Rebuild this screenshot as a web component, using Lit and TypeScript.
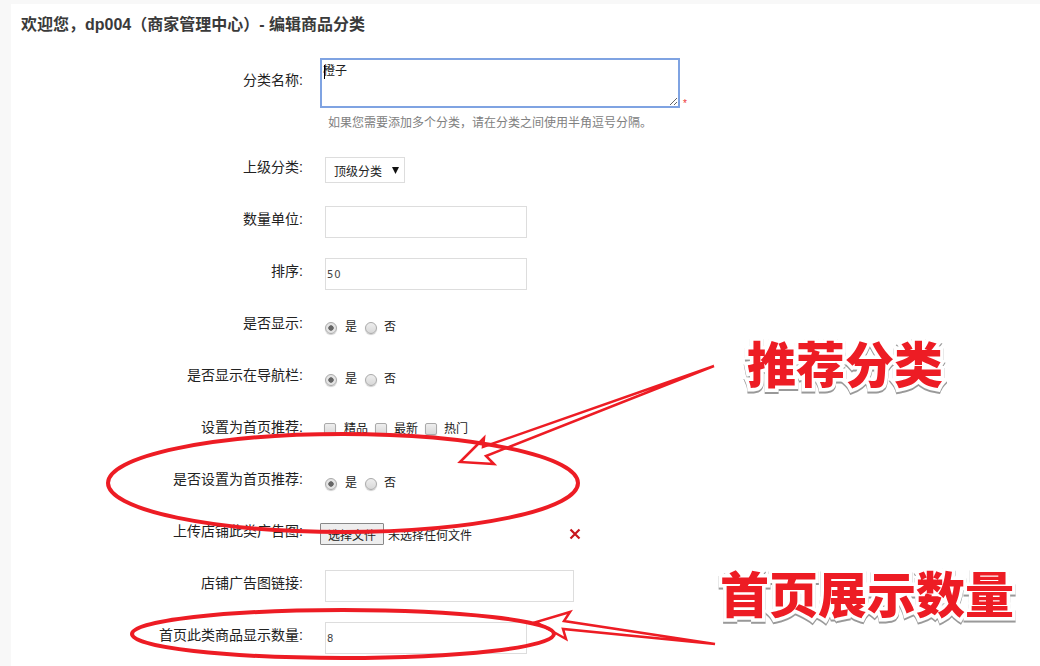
import { LitElement, html, css } from "lit";
import { customElement } from "lit/decorators.js";

@customElement("app-root")
export class AppRoot extends LitElement {
  static styles = css`
    :host { display: block; width: 1040px; height: 666px; overflow: hidden; position: relative; background: #f8f8f8; font-family: "Liberation Sans", "Noto Sans CJK SC", sans-serif; color: #222; }
    .panel { margin: 4px 0 0 11px; height: 662px; background: #fff; padding: 0 0 0 10px; box-sizing: border-box; }
    h1 { margin: 0; height: 54px; font-size: 16px; line-height: 42px; font-weight: bold; color: #3a3a3a; }
    .row { display: flex; height: 52px; margin-left: -21px; }
    .row.first { height: 96px; }
    .label { width: 282px; padding-left: 21px; box-sizing: content-box; flex: none; text-align: right; font-size: 14px; line-height: 26px; white-space: nowrap; }
    .first .label { padding-top: 9px; }
    .ctl { margin-left: 22px; font-size: 12px; position: relative; }
    .ta-wrap { position: relative; margin-left: -5px; display: flex; align-items: flex-end; }
    textarea { width: 360px; height: 50px; box-sizing: border-box; border: 2px solid #7fa3e2; outline: none; padding: 1px 1px; font: 12px "Noto Sans CJK SC", sans-serif; color: #222; margin: 0; display: block; }
    .caret { position: absolute; left: 4px; top: 7px; width: 1px; height: 14px; background: #000; }
    .star { color: #e33; font-size: 10px; margin: 0 0 -3px 3px; line-height: 14px; }
    .hint { margin: 7px 0 0 3px; color: #808080; font-size: 12px; line-height: 16px; white-space: nowrap; }
    .select { margin-top: 3px; width: 80px; height: 26px; box-sizing: border-box; border: 1px solid #ddd; display: flex; align-items: center; justify-content: space-between; padding: 0 5px 0 8px; font-size: 12px; }
    .select svg { width: 7px; height: 7px; }
    input.text { display: block; width: 202px; height: 32px; box-sizing: border-box; border: 1px solid #ddd; padding: 0 1px; font: 10px "DejaVu Sans", sans-serif; letter-spacing: 1px; color: #444; margin: 0; outline: none; }
    input.wide { width: 249px; }
    .opts { display: flex; align-items: center; height: 20px; margin-top: 8px; line-height: 20px; font-size: 12px; }
    .opts input { appearance: none; -webkit-appearance: none; margin: 0 8px 0 0; flex: none; width: 12px; height: 12px; box-sizing: border-box; border: 1px solid #aaa; background: linear-gradient(#eee, #d8d8d8); box-shadow: 0 1px 1px #ccc; }
    .opts input[type="radio"] { border-radius: 50%; }
    .opts input[type="radio"]:checked { background: radial-gradient(circle, #666 0 2.4px, #e4e4e4 3px); }
    .opts input[type="checkbox"] { border-radius: 2px; }
    .opts span { margin: -3px 8px 0 0; }
    .opts input + span + input { margin-right: 7px; }
    .opts.cb { margin-top: 5px; margin-left: -1px; }
    .opts.cb span { margin: 0 7px 0 0; }
    .file { display: flex; align-items: center; margin: 5px 0 0 -5px; font-size: 12px; }
    .file button { width: 64px; height: 22px; padding: 0; border: 1px solid #888; border-radius: 1px; background: #eee; font: 12px "Noto Sans CJK SC", sans-serif; color: #222; margin-right: 4px; }
    .remove { position: absolute; left: 244px; top: 10px; width: 12px; height: 12px; }
    .anno { position: absolute; left: 0; top: 0; width: 1040px; height: 666px; pointer-events: none; }
    .big { position: absolute; white-space: nowrap; font-family: "Noto Sans CJK SC", sans-serif; font-weight: 900; color: #ed1c24; -webkit-text-stroke: 7px #fff; paint-order: stroke fill; filter: drop-shadow(0 2px 0 #999); line-height: 1; }
    .b1 { left: 747px; top: 337px; font-size: 49px; }
    .b2 { left: 720px; top: 567px; font-size: 49px; }
  `;

  private yn() {
    return html`<div class="opts"><input type="radio" checked /><span>是</span><input type="radio" /><span>否</span></div>`;
  }

  render() {
    return html`
      <div class="panel">
        <h1>欢迎您，dp004（商家管理中心）- 编辑商品分类</h1>
        <div class="row first">
          <div class="label">分类名称:</div>
          <div class="ctl">
            <div class="ta-wrap"><textarea .value=${"橙子"}></textarea><i class="caret"></i><span class="star">*</span></div>
            <div class="hint">如果您需要添加多个分类，请在分类之间使用半角逗号分隔。</div>
          </div>
        </div>
        <div class="row">
          <div class="label">上级分类:</div>
          <div class="ctl"><div class="select">顶级分类<svg viewBox="0 0 7 7"><path d="M0 0h7L3.5 7z" fill="#111"/></svg></div></div>
        </div>
        <div class="row"><div class="label">数量单位:</div><div class="ctl"><input class="text" /></div></div>
        <div class="row"><div class="label">排序:</div><div class="ctl"><input class="text" value="50" /></div></div>
        <div class="row"><div class="label">是否显示:</div><div class="ctl">${this.yn()}</div></div>
        <div class="row"><div class="label">是否显示在导航栏:</div><div class="ctl">${this.yn()}</div></div>
        <div class="row">
          <div class="label">设置为首页推荐:</div>
          <div class="ctl"><div class="opts cb"><input type="checkbox" /><span>精品</span><input type="checkbox" /><span>最新</span><input type="checkbox" /><span>热门</span></div></div>
        </div>
        <div class="row"><div class="label">是否设置为首页推荐:</div><div class="ctl">${this.yn()}</div></div>
        <div class="row">
          <div class="label">上传店铺此类广告图:</div>
          <div class="ctl"><div class="file"><button>选择文件</button>未选择任何文件</div>
            <svg class="remove" viewBox="0 0 12 12"><path d="M1.5 1.5l9 9M10.5 1.5l-9 9" stroke="#c8161d" stroke-width="2.2" fill="none"/></svg>
          </div>
        </div>
        <div class="row"><div class="label">店铺广告图链接:</div><div class="ctl"><input class="text wide" /></div></div>
        <div class="row"><div class="label">首页此类商品显示数量:</div><div class="ctl"><input class="text" value="8" /></div></div>
      </div>
      <svg class="anno" viewBox="0 0 1040 666" fill="none" stroke="#ed1c24" stroke-linejoin="miter">
        <ellipse cx="343" cy="483" rx="235" ry="49" stroke-width="4"/>
        <ellipse cx="343" cy="634" rx="211" ry="24" stroke-width="4"/>
        <path d="M714 366 L483 447 L484 438 L460 462 L494 464 L486 456 Z" stroke-width="2.5"/>
        <path d="M715 644 L563 629 L566 639 L536 622 L570 612 L564 621 Z" stroke-width="2.5"/>
      </svg>
      <div class="big b1">推荐分类</div>
      <div class="big b2">首页展示数量</div>
    `;
  }
}
